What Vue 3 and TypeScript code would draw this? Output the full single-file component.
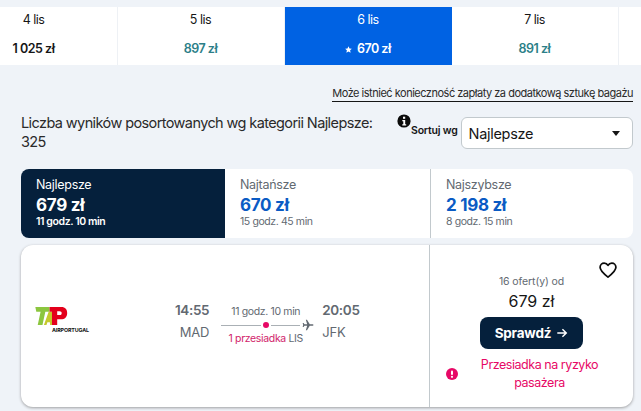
<template>
  <div class="page">
    <!-- pasek dat -->
    <div class="dates">
      <div
        v-for="d in dates"
        :key="d.day"
        class="date-cell"
        :class="{ active: d.active }"
      >
        <span class="date-day">{{ d.day }}</span>
        <span class="date-price" :class="d.tone">
          <svg v-if="d.active" class="star" viewBox="0 0 10 10" width="7" height="7">
            <path d="M5 .3l1.45 3.1 3.35.4-2.5 2.3.67 3.4L5 7.8 2 9.5l.68-3.4-2.5-2.3 3.37-.4z" fill="#fff" />
          </svg>
          {{ d.price }}
        </span>
      </div>
    </div>

    <div class="baggage-row">
      <a class="baggage">Może istnieć konieczność zapłaty za dodatkową sztukę bagażu</a>
    </div>

    <!-- sortowanie -->
    <div class="sort-row">
      <p class="results">Liczba wyników posortowanych wg kategorii Najlepsze: 325</p>
      <svg class="info" viewBox="0 0 14 14" width="14" height="14">
        <circle cx="7" cy="7" r="6.6" fill="#0b0b0b" />
        <rect x="6" y="2.7" width="2.2" height="2.1" fill="#fff" />
        <path d="M5.3 6h2.9v4.2h1v1.2H5.300v-1.200h1V7.200h-1z" fill="#fff" />
      </svg>
      <span class="sort-label">Sortuj wg</span>
      <div class="select">
        <span>Najlepsze</span>
        <i class="caret"></i>
      </div>
    </div>

    <!-- zakładki -->
    <div class="tabs">
      <div
        v-for="t in tabs"
        :key="t.name"
        class="tab"
        :class="{ selected: t.selected }"
      >
        <span class="tab-name">{{ t.name }}</span>
        <span class="tab-price">{{ t.price }}</span>
        <span class="tab-time">{{ t.time }}</span>
      </div>
    </div>

    <!-- oferta -->
    <div class="card">
      <div class="card-main">
        <div class="logo">
          <svg viewBox="0 0 34 20" width="33" height="19">
            <path d="M0 0h15v5h-4.500L7.500 19H2.500L5.500 5H1z" fill="#8cc63f" />
            <path d="M9 19L14 5h5l1 14h-4.500l-.2-3h-2.600l-1 3z" fill="#c4c92c" />
            <path d="M15 0h12.500C31.500 0 33.500 2.500 33.500 6.500S31 13 27 13h-4v6h-5.500V5H15z" fill="#e3001b" />
            <path d="M23 4.500h2.500c1.500 0 2.200.8 2.200 2s-.8 2-2.200 2H23z" fill="#fff" />
          </svg>
          <span class="logo-text">AIRPORTUGAL</span>
        </div>
        <div class="route">
          <div class="point right">
            <span class="time">14:55</span>
            <span class="place">MAD</span>
          </div>
          <div class="leg">
            <span class="duration">11 godz. 10 min</span>
            <div class="line">
              <span class="dash long"></span>
              <i class="stop"></i>
              <span class="dash"></span>
              <svg viewBox="0 0 24 24" width="12" height="12">
                <path d="M23 12c0-.9-.8-1.400-1.700-1.400h-5.800L10 1.500H7.700l2.600 9.100H5L3.200 8H1.300l1.100 4-1.100 4h1.900L5 13.400h5.300l-2.600 9.100H10l5.500-9.100h5.800c.9 0 1.700-.5 1.700-1.400z" fill="#626971" />
              </svg>
            </div>
            <span class="stops"><em>1 przesiadka</em> LIS</span>
          </div>
          <div class="point">
            <span class="time">20:05</span>
            <span class="place">JFK</span>
          </div>
        </div>
      </div>
      <div class="card-side">
        <svg class="heart" viewBox="0 0 24 24" width="20" height="20">
          <path d="M12 20.500C6 16 2.500 12.800 2.500 8.800 2.500 5.800 4.800 3.700 7.400 3.700c1.900 0 3.600 1 4.600 2.800 1-1.800 2.700-2.800 4.600-2.800 2.600 0 4.900 2.100 4.900 5.100 0 4-3.500 7.200-9.500 11.700z" fill="none" stroke="#0b0b0b" stroke-width="2.100" stroke-linejoin="round" />
        </svg>
        <span class="offers">16 ofert(y) od</span>
        <span class="price">679 zł</span>
        <button class="check">
          Sprawdź
          <svg viewBox="0 0 14 14" width="12" height="12">
            <path d="M1.500 7h10.500M7.500 2.500L12 7l-4.500 4.500" fill="none" stroke="#fff" stroke-width="1.700" />
          </svg>
        </button>
        <div class="risk">
          <svg viewBox="0 0 12 12" width="12" height="12">
            <circle cx="6" cy="6" r="6" fill="#e70866" />
            <rect x="5" y="2.400" width="2" height="4.600" rx="1" fill="#fff" />
            <circle cx="6" cy="8.800" r="1.100" fill="#fff" />
          </svg>
          <span>Przesiadka na ryzyko pasażera</span>
        </div>
      </div>
    </div>
  </div>
</template>

<script setup lang="ts">
interface DateCell {
  day: string
  price: string
  tone: string
  active?: boolean
}

interface Tab {
  name: string
  price: string
  time: string
  selected?: boolean
}

const dates: DateCell[] = [
  { day: '4 lis', price: '1 025 zł', tone: 'dark' },
  { day: '5 lis', price: '897 zł', tone: 'teal' },
  { day: '6 lis', price: '670 zł', tone: 'white', active: true },
  { day: '7 lis', price: '891 zł', tone: 'teal' }
]

const tabs: Tab[] = [
  { name: 'Najlepsze', price: '679 zł', time: '11 godz. 10 min', selected: true },
  { name: 'Najtańsze', price: '670 zł', time: '15 godz. 45 min' },
  { name: 'Najszybsze', price: '2 198 zł', time: '8 godz. 15 min' }
]
</script>

<style>
html,
body {
  margin: 0;
  overflow: hidden;
  background: #eff3f8;
}
</style>

<style scoped>
.page {
  width: 641px;
  height: 411px;
  overflow: hidden;
  padding-top: 7px;
  box-sizing: border-box;
  background: #eff3f8;
  font-family: Inter, "Noto Sans", sans-serif;
  color: #161616;
}

.dates {
  display: flex;
  height: 58px;
  width: 690px;
  margin-left: -49px;
  background: #fff;
}

.date-cell {
  flex: 0 0 167px;
  box-sizing: border-box;
  display: flex;
  flex-direction: column;
  align-items: center;
  padding: 5px 1px 0 0;
  border-right: 1px solid #eef1f5;
}

.date-cell.active {
  background: #0062e3;
  color: #fff;
  border-right: none;
}

.date-day {
  font-size: 12.500px;
  line-height: 16px;
  letter-spacing: -0.5px;
}

.date-price {
  margin-top: 13px;
  font-size: 12.500px;
  line-height: 16px;
  font-weight: 600;
  letter-spacing: -0.5px;
}

.date-price.teal {
  color: #2c7f88;
}

.date-price.white {
  color: #fff;
}

.star {
  margin-right: 2px;
}

.baggage-row {
  display: flex;
  justify-content: flex-end;
  padding: 21px 8px 0 0;
}

.baggage {
  font-size: 11px;
  line-height: 15px;
  letter-spacing: -0.49px;
  border-bottom: 1px solid #161616;
  color: #2a2a2a;
}

.sort-row {
  display: flex;
  align-items: flex-start;
  padding: 15px 8px 0 21px;
  height: 40px;
}

.results {
  width: 365px;
  margin: -4px 0 0;
  font-size: 14.500px;
  line-height: 19px;
  letter-spacing: -0.6px;
  color: #2a2a2a;
}

.info {
  margin: -3px 0 0 11px;
  flex: none;
}

.sort-label {
  margin: 8px 3px 0 0;
  font-size: 10.500px;
  line-height: 12px;
  font-weight: 600;
  letter-spacing: -0.2px;
  white-space: nowrap;
}

.select {
  flex: 1;
  height: 32px;
  box-sizing: border-box;
  display: flex;
  align-items: center;
  justify-content: space-between;
  padding: 0 12px 0 7px;
  background: #fff;
  border: 1px solid #c2c9cd;
  border-radius: 6px;
  font-size: 14.500px;
  letter-spacing: -0.3px;
}

.caret {
  width: 0;
  height: 0;
  border-left: 4px solid transparent;
  border-right: 4px solid transparent;
  border-top: 5px solid #161616;
}

.tabs {
  display: grid;
  grid-template-columns: 204px 205px 1fr;
  height: 69px;
  margin: 12px 8px 0 21px;
  background: #fff;
  border-radius: 8px;
  overflow: hidden;
}

.tab {
  display: flex;
  flex-direction: column;
  padding: 8px 15px;
  box-sizing: border-box;
  color: #626971;
}

.tab + .tab + .tab {
  border-left: 1px solid #c2c9cd;
}

.tab.selected {
  background: #05203c;
  color: #fff;
}

.tab-name {
  font-size: 12.500px;
  line-height: 16px;
  letter-spacing: -0.3px;
}

.tab-price {
  margin-top: 1px;
  font-size: 17px;
  line-height: 22px;
  font-weight: 700;
  letter-spacing: -0.3px;
  color: #0a5bc4;
}

.tab.selected .tab-price {
  color: #fff;
}

.tab-time {
  margin-top: -1px;
  font-size: 10.500px;
  line-height: 14px;
  letter-spacing: -0.4px;
}

.tab.selected .tab-time {
  font-weight: 600;
}

.card {
  display: flex;
  height: 162px;
  margin: 7px 8px 0 21px;
  background: #fff;
  border-radius: 12px;
  box-shadow: 0 1px 3px rgba(37, 32, 31, 0.4);
}

.card-main {
  position: relative;
  width: 408px;
  display: flex;
  align-items: center;
  border-right: 1px solid #c2c9cd;
}

.logo {
  width: 68px;
  margin: -13px 0 0 14px;
  display: flex;
  flex-direction: column;
}

.logo svg {
  display: block;
}

.logo-text {
  margin: 1px 0 0 17px;
  font-size: 5.300px;
  line-height: 6px;
  font-weight: 700;
  letter-spacing: -0.1px;
  color: #111;
  white-space: nowrap;
}

.route {
  display: flex;
  align-items: flex-start;
  margin: -6px 0 0 72px;
}

.point {
  display: flex;
  flex-direction: column;
}

.point.right {
  align-items: flex-end;
}

.time {
  font-size: 13.500px;
  line-height: 20px;
  font-weight: 600;
  letter-spacing: -0.35px;
  color: #626971;
}

.place {
  margin-top: 2px;
  font-size: 13px;
  line-height: 20px;
  letter-spacing: -0.2px;
  color: #626971;
}

.leg {
  width: 93px;
  margin: 0 8px 0 12px;
  display: flex;
  flex-direction: column;
  align-items: center;
  padding-top: 5px;
}

.duration,
.stops {
  padding-right: 4px;
  font-size: 10.500px;
  line-height: 14px;
  letter-spacing: -0.35px;
  color: #626971;
  white-space: nowrap;
}

.stops em {
  font-style: normal;
  color: #d1246b;
}

.line {
  width: 93px;
  height: 12px;
  display: flex;
  align-items: center;
  gap: 2px;
  margin: 0 0 1px;
}

.dash {
  flex: 1;
  height: 1px;
  background: #aab0b5;
}

.dash.long {
  flex: 0 0 40px;
}

.stop {
  width: 6px;
  height: 6px;
  border-radius: 50%;
  background: #e70866;
}

.card-side {
  position: relative;
  flex: 1;
  display: flex;
  flex-direction: column;
  align-items: center;
  padding-top: 30px;
  box-sizing: border-box;
}

.heart {
  position: absolute;
  top: 15px;
  right: 15px;
}

.offers {
  font-size: 10.500px;
  line-height: 14px;
  letter-spacing: -0.1px;
  color: #626971;
}

.price {
  margin-top: 2px;
  font-size: 16px;
  line-height: 20px;
  color: #161616;
}

.check {
  width: 103px;
  height: 32px;
  margin-top: 6px;
  display: flex;
  align-items: center;
  justify-content: center;
  gap: 5px;
  border: none;
  border-radius: 8px;
  background: #05203c;
  color: #fff;
  font-family: inherit;
  font-size: 13.500px;
  font-weight: 700;
  letter-spacing: -0.2px;
}

.risk {
  margin-top: 7px;
  width: 100%;
  display: flex;
  align-items: center;
  padding: 0 12px 0 16px;
  box-sizing: border-box;
}

.risk svg {
  flex: none;
}

.risk span {
  flex: 1;
  text-align: center;
  font-size: 12.500px;
  line-height: 18px;
  letter-spacing: -0.45px;
  color: #e70866;
}
</style>
